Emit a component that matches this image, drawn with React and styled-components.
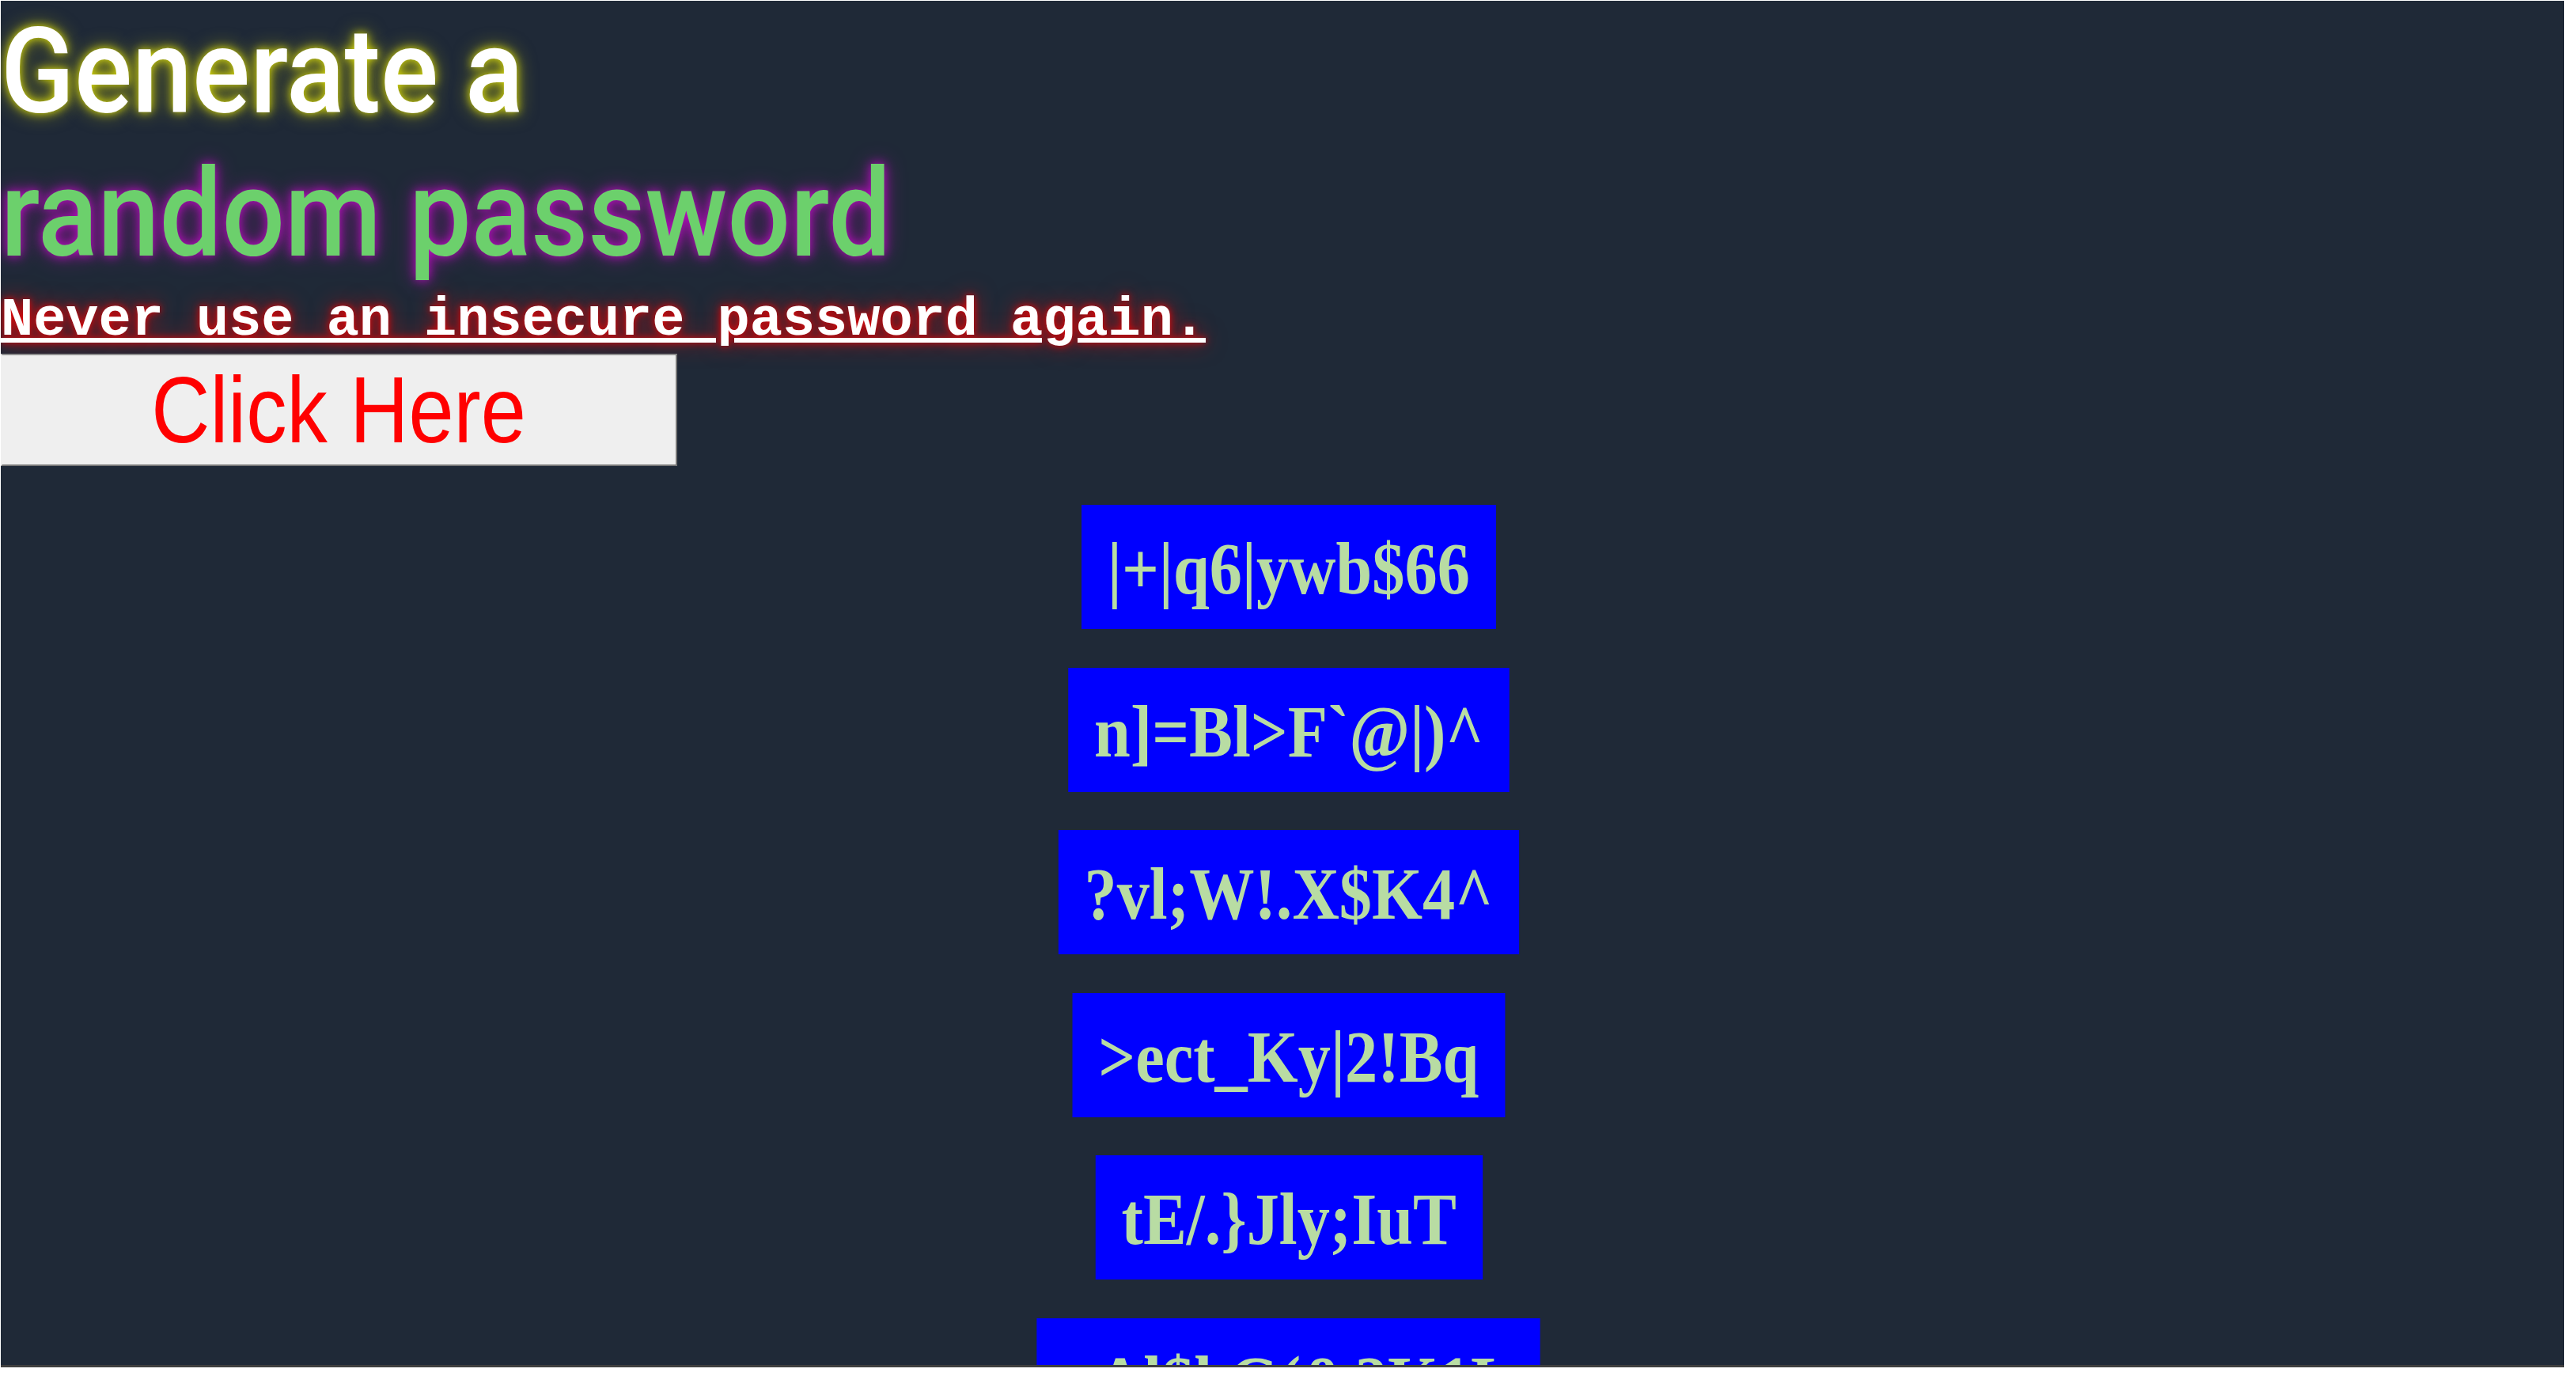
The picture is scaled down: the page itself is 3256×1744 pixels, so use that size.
import React from 'react';
import styled, { createGlobalStyle } from 'styled-components';

const GlobalStyle = createGlobalStyle`
  html, body {
    margin: 0;
    padding: 0;
    background: #ffffff;
  }
`;

const passwords = [
    '|+|q6|ywb$66',
    'n]=Bl>F`@|)^',
    '?vl;W!.X$K4^',
    '>ect_Ky|2!Bq',
    'tE/.}Jly;IuT',
    '~Al$l.G(&?K1L',
];

const App = () => {
    return (
        <>
            <GlobalStyle />
            <Frame>
                <Header>
                    <Title>
                        <TitleLine $tone="white" $size={150}>Generate a</TitleLine>
                        <TitleLine $tone="green" $size={154}>random password</TitleLine>
                    </Title>
                    <Tagline>Never use an insecure password again.</Tagline>
                    <GenerateButton type="button">
                        <ButtonLabel>Click Here</ButtonLabel>
                    </GenerateButton>
                </Header>
                <PasswordList>
                    {passwords.map((pw, i) => (
                        <PasswordItem key={i}>{pw}</PasswordItem>
                    ))}
                </PasswordList>
            </Frame>
        </>
    );
};

const Frame = styled.div`
  width: 3240px;
  height: 1724px;
  margin: 1px 0 0 1px;
  background: #1f2937;
  overflow: hidden;
  border-bottom: 3px solid #3f3f3f;
  box-sizing: content-box;
`;

const Header = styled.div`
  display: flex;
  flex-direction: column;
  align-items: flex-start;
`;

const Title = styled.h1`
  margin: 0;
  font-family: Roboto, "Liberation Sans", sans-serif;
  font-weight: 500;
  line-height: 180px;
`;

const TitleLine = styled.span`
  display: block;
  font-size: ${p => p.$size}px;
  white-space: nowrap;
  transform: scaleX(0.91);
  transform-origin: left center;
  color: ${p => (p.$tone === 'green' ? '#6cd06c' : '#ffffff')};
  text-shadow: ${p => (p.$tone === 'green'
        ? '0 0 14px rgba(255, 0, 255, 0.7), 0 0 30px rgba(200, 0, 200, 0.45)'
        : '0 0 12px rgba(255, 255, 0, 0.8), 0 0 26px rgba(220, 220, 0, 0.55)')};
`;

const Tagline = styled.p`
  margin: 4px 0 0;
  font-family: "Liberation Mono", "Courier New", monospace;
  font-weight: 700;
  font-size: 68.6px;
  line-height: 80px;
  color: #ffffff;
  text-decoration: underline;
  text-shadow: 0 0 10px rgba(255, 0, 0, 0.9), 0 0 28px rgba(255, 0, 0, 0.65);
  white-space: nowrap;
`;

const GenerateButton = styled.button`
  margin-top: 2px;
  width: 855px;
  height: 142px;
  padding: 0;
  background: #efefef;
  border: 2px solid #767676;
  border-top-color: #8f8f8f;
  border-left-color: #efefef;
  display: flex;
  align-items: center;
  justify-content: center;
  font-family: "Liberation Sans", Arial, sans-serif;
  font-size: 118px;
  color: #ff0000;
  cursor: pointer;
`;

const ButtonLabel = styled.span`
  display: inline-block;
  transform: scaleX(0.87);
  white-space: nowrap;
`;

const PasswordList = styled.div`
  margin-top: 49px;
  padding-left: 16px;
  display: flex;
  flex-direction: column;
  align-items: center;
  gap: 48.5px;
`;

const PasswordItem = styled.div`
  background: #0000ff;
  color: #b8dca3;
  font-family: "Liberation Serif", "Times New Roman", serif;
  font-weight: 700;
  font-size: 93px;
  line-height: 103px;
  padding: 29px 37px 25px;
  white-space: nowrap;
  transform: scaleX(0.885);
`;

export default App;
